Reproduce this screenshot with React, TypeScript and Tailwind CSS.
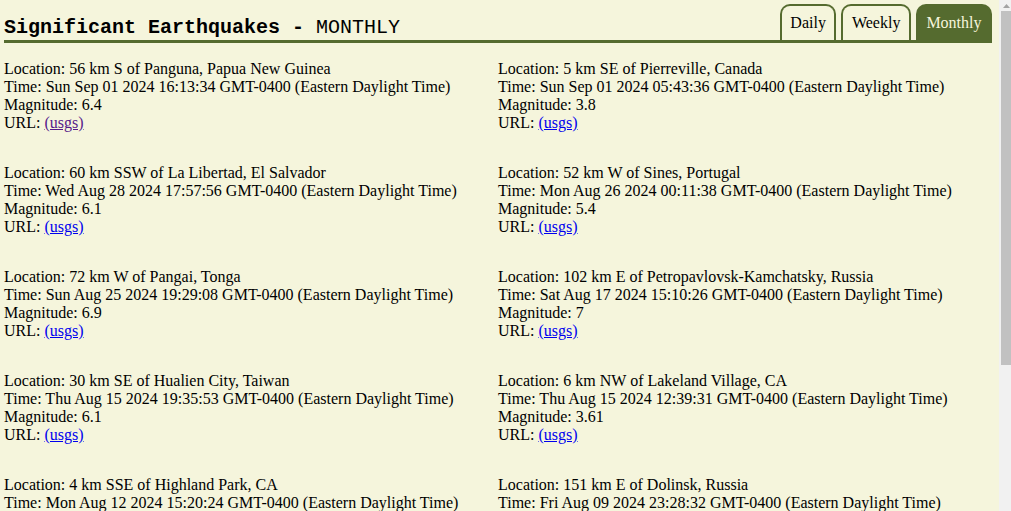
import React from "react";

type Quake = { location: string; time: string; mag: string; visited?: boolean };

const quakes: Quake[] = [
  { location: "56 km S of Panguna, Papua New Guinea", time: "Sun Sep 01 2024 16:13:34 GMT-0400 (Eastern Daylight Time)", mag: "6.4", visited: true },
  { location: "5 km SE of Pierreville, Canada", time: "Sun Sep 01 2024 05:43:36 GMT-0400 (Eastern Daylight Time)", mag: "3.8" },
  { location: "60 km SSW of La Libertad, El Salvador", time: "Wed Aug 28 2024 17:57:56 GMT-0400 (Eastern Daylight Time)", mag: "6.1" },
  { location: "52 km W of Sines, Portugal", time: "Mon Aug 26 2024 00:11:38 GMT-0400 (Eastern Daylight Time)", mag: "5.4" },
  { location: "72 km W of Pangai, Tonga", time: "Sun Aug 25 2024 19:29:08 GMT-0400 (Eastern Daylight Time)", mag: "6.9" },
  { location: "102 km E of Petropavlovsk-Kamchatsky, Russia", time: "Sat Aug 17 2024 15:10:26 GMT-0400 (Eastern Daylight Time)", mag: "7" },
  { location: "30 km SE of Hualien City, Taiwan", time: "Thu Aug 15 2024 19:35:53 GMT-0400 (Eastern Daylight Time)", mag: "6.1" },
  { location: "6 km NW of Lakeland Village, CA", time: "Thu Aug 15 2024 12:39:31 GMT-0400 (Eastern Daylight Time)", mag: "3.61" },
  { location: "4 km SSE of Highland Park, CA", time: "Mon Aug 12 2024 15:20:24 GMT-0400 (Eastern Daylight Time)", mag: "4.4" },
  { location: "151 km E of Dolinsk, Russia", time: "Fri Aug 09 2024 23:28:32 GMT-0400 (Eastern Daylight Time)", mag: "6.8" },
  { location: "9 km WSW of Miyazaki, Japan", time: "Thu Aug 08 2024 03:42:55 GMT-0400 (Eastern Daylight Time)", mag: "7.1" },
  { location: "29 km ENE of Hasaki, Japan", time: "Wed Aug 07 2024 22:04:31 GMT-0400 (Eastern Daylight Time)", mag: "5.5" },
];

export default function App() {
  return (
    <div className="flex h-screen w-full overflow-hidden bg-[#f5f5dc]">
      <div
        className="min-w-0 flex-1 overflow-hidden pl-1 pr-[7px] pt-1 text-black"
        style={{ fontFamily: '"Liberation Serif", "Times New Roman", serif' }}
      >
        <div className="flex items-end justify-between border-b-[3px] border-[#556b2f]">
          <h1
            className="mb-[1px] text-[20px] leading-[23px] text-black"
            style={{ fontFamily: '"Liberation Mono", "Courier New", monospace' }}
          >
            <span className="font-bold">Significant Earthquakes - </span>
            <span>MONTHLY</span>
          </h1>
          <div className="flex items-end gap-[5px]">
            <div className="rounded-t-[10px] border-2 border-b-0 border-[#556b2f] px-[8.5px] py-2 text-[16px] leading-[18px]">
              Daily
            </div>
            <div className="rounded-t-[10px] border-2 border-b-0 border-[#556b2f] px-[8.5px] py-2 text-[16px] leading-[18px]">
              Weekly
            </div>
            <div className="rounded-t-[10px] border-2 border-b-0 border-[#556b2f] bg-[#556b2f] px-[8.5px] py-2 text-[16px] leading-[18px] text-[#f5f5dc]">
              Monthly
            </div>
          </div>
        </div>
        <div className="mt-[17px] grid grid-cols-2 gap-y-8 text-[16px] leading-[18px]">
          {quakes.map((q, i) => (
            <div key={i}>
              <div>Location: {q.location}</div>
              <div>Time: {q.time}</div>
              <div>Magnitude: {q.mag}</div>
              <div>
                URL:{" "}
                <a href="#" className={q.visited ? "text-[#551a8b] underline" : "text-[#0000ee] underline"}>
                  (usgs)
                </a>
              </div>
            </div>
          ))}
        </div>
      </div>
      <div className="flex w-[12px] shrink-0 flex-col bg-[#f1f1f1]">
        <div className="flex h-[11px] items-center justify-center pl-[2px]">
          <svg width="7" height="4" viewBox="0 0 7 4">
            <polygon points="3.5,0 7,4 0,4" fill="#a3a3a3" />
          </svg>
        </div>
        <div className="ml-[2px] h-[354px] bg-[#c1c1c1]" />
      </div>
    </div>
  );
}
